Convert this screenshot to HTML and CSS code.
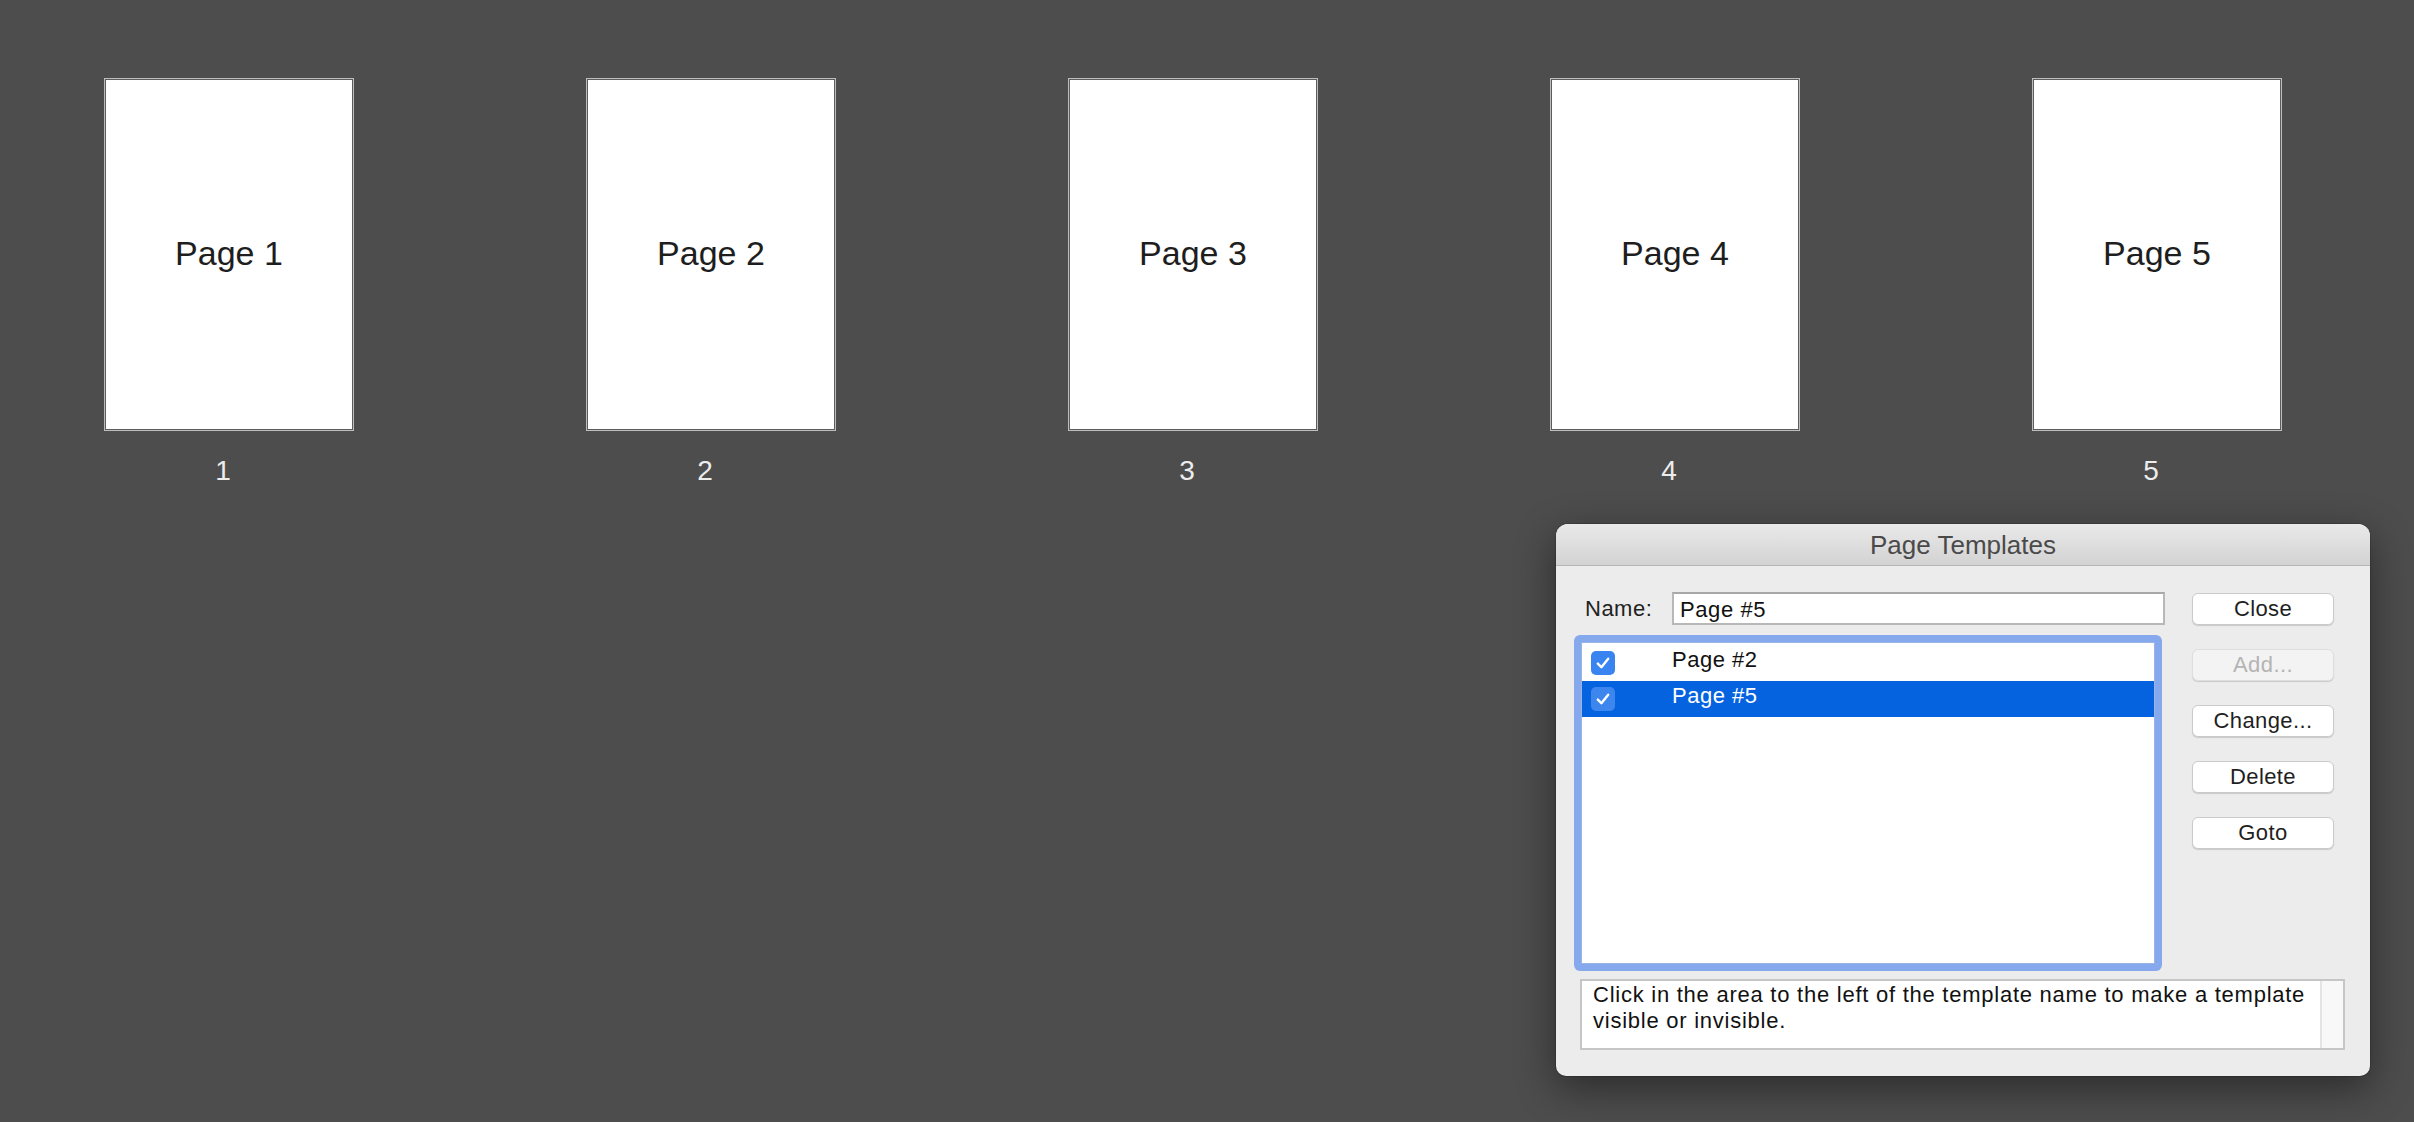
FILE: index.html
```html
<!DOCTYPE html>
<html lang="en">
<head>
    <meta charset="UTF-8">
    <title>Page Templates</title>
    <link rel="stylesheet" href="styles.css">
</head>
<body>

<div class="pages">
    <div class="page-item">
        <div class="page">Page 1</div>
        <div class="page-num">1</div>
    </div>
    <div class="page-item">
        <div class="page">Page 2</div>
        <div class="page-num">2</div>
    </div>
    <div class="page-item">
        <div class="page">Page 3</div>
        <div class="page-num">3</div>
    </div>
    <div class="page-item">
        <div class="page">Page 4</div>
        <div class="page-num">4</div>
    </div>
    <div class="page-item">
        <div class="page">Page 5</div>
        <div class="page-num">5</div>
    </div>
</div>

<div class="dialog">
    <div class="dialog-title">Page Templates</div>
    <div class="dialog-body">
        <div class="dialog-main">
            <div class="left-col">
                <div class="name-row">
                    <label for="name">Name:</label>
                    <input type="text" id="name" value="Page #5">
                </div>
                <div class="list-ring">
                    <div class="list">
                        <div class="list-row">
                            <span class="check">
                                <svg width="24" height="24" viewBox="0 0 24 24"><path d="M6.8 12.6 L10.4 16.2 L17.2 7.8" fill="none" stroke="#fff" stroke-width="2.4" stroke-linecap="round" stroke-linejoin="round"/></svg>
                            </span>
                            <span class="row-name">Page #2</span>
                        </div>
                        <div class="list-row selected">
                            <span class="check">
                                <svg width="24" height="24" viewBox="0 0 24 24"><path d="M6.8 12.6 L10.4 16.2 L17.2 7.8" fill="none" stroke="#fff" stroke-width="2.4" stroke-linecap="round" stroke-linejoin="round"/></svg>
                            </span>
                            <span class="row-name">Page #5</span>
                        </div>
                    </div>
                </div>
            </div>
            <div class="btn-col">
                <button class="btn">Close</button>
                <button class="btn" disabled>Add...</button>
                <button class="btn">Change...</button>
                <button class="btn">Delete</button>
                <button class="btn">Goto</button>
            </div>
        </div>
        <div class="help-box">
            <div class="help-text">Click in the area to the left of the template name to make a template<br>visible or invisible.</div>
            <div class="help-scroll"></div>
        </div>
    </div>
</div>

</body>
</html>
```

FILE: styles.css
```css
body {
    margin: 0;
    background-color: #4d4d4d;
    font-family: "Liberation Sans", Arial, sans-serif;
    height: 1122px;
    overflow: hidden;
}

/* rangée des pages */
.pages {
    display: flex;
    gap: 232px;
    padding: 78px 0 0 104px;
}

.page-item {
    width: 250px;
}

.page {
    height: 353px;
    box-sizing: border-box;
    background-color: #fff;
    border: 1px solid #bdbdbd;
    box-shadow: inset 0 0 0 1px #5c5c5c;
    display: flex;
    align-items: center;
    justify-content: center;
    font-size: 34px;
    color: #1e1e1e;
    padding-bottom: 2px;
}

.page-num {
    margin-top: 24px;
    margin-right: 12px;
    text-align: center;
    font-size: 28px;
    line-height: 32px;
    color: #ececec;
}

/* fenêtre flottante */
.dialog {
    position: absolute;
    left: 1556px;
    top: 524px;
    width: 814px;
    height: 552px;
    background-color: #ececec;
    border-radius: 12px 12px 10px 10px;
    box-shadow: 0 12px 40px rgba(0,0,0,0.45), 0 0 0 1px rgba(0,0,0,0.15);
    overflow: hidden;
}

.dialog-title {
    height: 42px;
    padding-top: 2px;
    box-sizing: border-box;
    border-bottom: 1px solid #b6b6b6;
    background: linear-gradient(#e9e9e9, #d3d3d3);
    display: flex;
    align-items: center;
    justify-content: center;
    font-size: 26px;
    color: #4a4a4a;
}

.dialog-body {
    padding: 26px 36px 0 18px;
    letter-spacing: 0.5px;
}

.dialog-main {
    display: flex;
    gap: 27px;
}

.left-col {
    width: 591px;
}

.name-row {
    display: flex;
    align-items: center;
    height: 33px;
    padding-left: 11px;
}

.name-row label {
    width: 87px;
    font-size: 22px;
    color: #222;
}

.name-row input {
    flex: 1;
    height: 33px;
    box-sizing: border-box;
    border: 2px solid #b8b8b8;
    border-top-color: #a8a8a8;
    padding: 2px 6px 0;
    font-family: inherit;
    font-size: 22px;
    letter-spacing: 0.6px;
    color: #111;
    background-color: #fff;
    outline: none;
}

.list-ring {
    margin-top: 10px;
    width: 588px;
    height: 336px;
    box-sizing: border-box;
    padding: 7px;
    background-color: #85a9ec;
    border-radius: 6px;
}

.list {
    height: 100%;
    box-sizing: border-box;
    background-color: #fff;
    border: 1px solid #98b3e4;
    padding-top: 2px;
}

.list-row {
    display: flex;
    align-items: center;
    height: 36px;
    padding-left: 9px;
    font-size: 22px;
    color: #111;
}

.list-row.selected {
    background-color: #0563e0;
    color: #fff;
}

.check {
    width: 24px;
    height: 24px;
    border-radius: 5px;
    background-color: #3a84f1;
    display: flex;
}

.selected .check {
    background-color: #3d86ee;
}

.row-name {
    margin-left: 57px;
    padding-bottom: 6px;
}

.btn-col {
    display: flex;
    flex-direction: column;
    gap: 24px;
    padding-top: 1px;
}

.btn {
    width: 142px;
    height: 32px;
    padding: 0;
    background-color: #fff;
    border: 1px solid #cacaca;
    border-radius: 6px;
    box-shadow: 0 1px 1px rgba(0,0,0,0.15);
    font-family: inherit;
    font-size: 22px;
    letter-spacing: 0.4px;
    color: #1f1f1f;
}

.btn:disabled {
    background-color: #f3f3f3;
    border-color: #dedede;
    color: #b4b4b4;
}

.help-box {
    margin-top: 8px;
    width: 765px;
    height: 71px;
    box-sizing: border-box;
    display: flex;
    border: 2px solid #c6c6c6;
    background-color: #fff;
    margin-left: 6px;
}

.help-text {
    flex: 1;
    padding: 1px 11px;
    font-size: 22px;
    line-height: 26px;
    letter-spacing: 0.75px;
    color: #111;
}

.help-scroll {
    width: 21px;
    background-color: #f8f8f8;
    border-left: 2px solid #e4e4e4;
}
```
